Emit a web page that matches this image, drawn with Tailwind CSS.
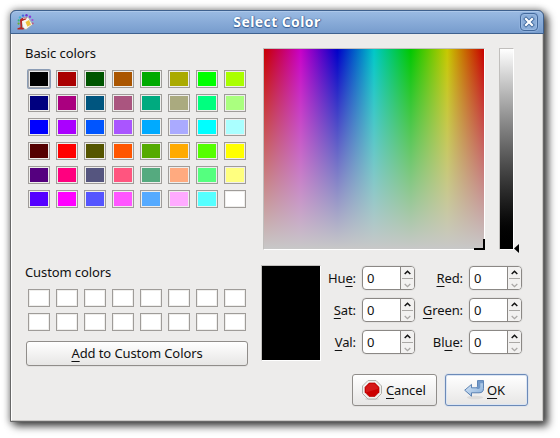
<!DOCTYPE html>
<html lang="en">
<head>
<meta charset="utf-8">
<title>Select Color</title>
<script src="https://cdn.jsdelivr.net/npm/@tailwindcss/browser@4"></script>
</head>
<body class="h-[438px] w-[560px] overflow-hidden bg-white pt-[10px] pl-[10px] font-['Noto_Sans',sans-serif] text-[13px] leading-[16px] text-[#111]">
<div class="flex h-[412px] w-[534px] flex-col rounded-t-[6px] border border-[#686868] bg-[#edeceb] shadow-[4px_4px_9px_0px_rgba(0,0,0,0.7),0_0_7px_1px_rgba(0,0,0,0.35)]">
  <header class="-mx-px -mt-px flex h-[24px] shrink-0 items-center rounded-t-[6px] border border-[#3f618e] bg-linear-to-b from-[#9bbbe3] to-[#779ccd] pr-[5px] pl-[6px] shadow-[inset_0_1px_0_#adc8ea]">
    <svg class="h-[17px] w-[17px]" viewBox="0 0 17 17">
      <g><circle cx="3" cy="3.4" r="1.2" fill="#3fb3d0"/><circle cx="6" cy="1.6" r="1.2" fill="#4068e0"/><circle cx="9.5" cy="1.2" r="1.2" fill="#6f35d0"/><circle cx="13" cy="2.8" r="1.2" fill="#8a3cd7"/><circle cx="15.4" cy="6" r="1.1" fill="#a34bd6"/><circle cx="1.7" cy="6.4" r="1.1" fill="#38b878"/><circle cx="15.6" cy="9.5" r="1.1" fill="#c04a80"/><circle cx="1.6" cy="9.6" r="1.1" fill="#66ad32"/></g>
      <path d="M4.5 7 11 3l4.5 7.5L9 15.5 6 14Z" fill="#f8f6f0" stroke="#a39a8c" stroke-width=".5"/>
      <path d="m8.5 8 3.5-2 2 4.5-3.5 2.2Z" fill="#edc03a"/>
      <path d="M3 5.5Q5 3 9.5 3.5L9 5.5 5 7v6.5l2 .5-.5 1.5H.5v-1.2l3-1Z" fill="#b72724"/>
      <path d="M6 4.4 9 4" stroke="#f5d8d5" stroke-width=".9"/>
    </svg>
    <h1 class="flex-1 text-center text-[14px] leading-[18px] font-bold tracking-[0.4px] text-white [text-shadow:0_0_1px_#365f95,0_1px_1px_#365f95,1px_0_1px_#4a72a8]">Select Color</h1>
    <button class="flex h-[18px] w-[18px] items-center justify-center rounded-[4px] border border-[#43699c] bg-[#8caed9] shadow-[0_0_0_1px_#8eb0dc,inset_0_0_0_1px_#9abae2]" aria-label="Close">
      <svg class="h-[12px] w-[12px]" viewBox="0 0 12 12"><path d="m3 3 6 6M9 3 3 9" stroke="#426b9f" stroke-width="4" stroke-linecap="square"/><path d="m3 3 6 6M9 3 3 9" stroke="#fff" stroke-width="2.2" stroke-linecap="square"/></svg>
    </button>
  </header>
  <main class="flex min-h-0 flex-1 border-r border-r-[#c9c7c5] border-b border-b-[#c9c7c5] border-l border-l-white">
    <section class="w-[249px] shrink-0 pt-[11px] pl-[13px]">
      <h2 class="tracking-[-0.07px] whitespace-nowrap">Basic colors</h2>
      <div id="basic" class="mt-[9px] ml-[3px] grid w-[218px] grid-cols-[repeat(8,22px)] gap-x-[6px] gap-y-[6px]"></div>
      <h2 class="mt-[56px] tracking-[-0.1px] whitespace-nowrap">Custom colors</h2>
      <div id="custom" class="mt-[9px] ml-[3px] grid w-[218px] grid-cols-[repeat(8,22px)] gap-x-[6px] gap-y-[6px]"></div>
      <button class="mt-[10px] ml-px block h-[25px] w-[222px] rounded-[3px] border border-[#908d8a] bg-linear-to-b from-white to-[#e7e6e5] pb-px tracking-[-0.1px] shadow-[0_1px_0_#e2e1e0]"><span class="underline decoration-1 underline-offset-[3px]">A</span>dd to Custom Colors</button>
    </section>
    <section class="min-w-0 flex-1 pt-[14px]">
      <div class="flex h-[205px] pl-[2px]">
        <div class="relative h-[202px] w-[222px] border border-t-[#c1bfbd] border-r-white border-b-white border-l-[#c1bfbd]">
          <div class="h-[200px] w-[220px] bg-[linear-gradient(to_bottom,rgba(200,200,200,0),rgb(200,200,200)),linear-gradient(to_right,#c80000,#c800c8,#0000c8,#00c8c8,#00c800,#c8c800,#c80000)]"></div>
          <div class="absolute -right-px -bottom-px h-[11px] w-[11px] border-r-2 border-b-2 border-black"></div>
        </div>
        <div class="ml-[14px] h-[202px] w-[15px] border border-t-[#c1bfbd] border-r-white border-b-white border-l-[#c1bfbd] bg-linear-to-b from-white to-black"></div>
        <svg class="mt-[196px] h-[9px] w-[5px]" viewBox="0 0 5 9"><path d="M0 4.5 5 0v9Z"/></svg>
      </div>
      <div class="mt-[12px] flex h-[96px]">
        <div class="h-[96px] w-[60px] border border-t-[#c1bfbd] border-r-white border-b-white border-l-[#c1bfbd] bg-black"></div>
        <div id="hsv" class="ml-[2px] grid grid-cols-[33px_53px] content-start gap-x-[6px] gap-y-[8px] pt-px"></div>
        <div id="rgb" class="ml-[5px] grid grid-cols-[43px_53px] content-start gap-x-[6px] gap-y-[8px] pt-px"></div>
      </div>
      <div class="mt-[13px] flex gap-[8px] pl-[91px]">
        <button class="flex h-[32px] w-[85px] items-center rounded-[3px] border border-[#908d8a] bg-linear-to-b from-white to-[#e7e6e5] pl-[9px] tracking-[-0.15px] shadow-[0_1px_0_#e2e1e0]">
          <svg class="h-[20px] w-[20px]" viewBox="0 0 20 20"><ellipse cx="10" cy="19" rx="7" ry="1" fill="#d2d1d0"/><path d="M6 .5h8L19.5 6v7.5L14 19H6L.5 13.5V6Z" fill="#f0f0ee" stroke="#b0b0ab"/><path d="M7.2 3h5.6L17 7.2v5.1l-4.2 4.2H7.2L3 12.3V7.2Z" fill="#cc0000" stroke="#b80000" stroke-width=".7"/><path d="M7.5 3.8h5L16 7.5v1.2L4 12.5v-5Z" fill="#e33d3d" opacity=".4"/></svg>
          <span class="ml-[4px]"><span class="underline decoration-1 underline-offset-[3px]">C</span>ancel</span>
        </button>
        <button class="flex h-[32px] w-[83px] items-center rounded-[3px] border border-[#6c8ab8] bg-linear-to-b from-white to-[#e7e6e5] pl-[18px] tracking-[-0.1px] shadow-[inset_0_0_0_1px_#dbe5f3,0_0_0_1px_#dfe4eb]">
          <svg class="h-[20px] w-[20px]" viewBox="0 0 20 20"><defs><linearGradient id="arrow" x1="0" y1="0" x2="1" y2="1"><stop stop-color="#e2eefa"/><stop offset="1" stop-color="#84acd8"/></linearGradient></defs><ellipse cx="11" cy="17.5" rx="8" ry="1.8" fill="#dddcdb"/><path d="M.7 10.2 7.5 4.4v3.4h4.6q1.4 0 1.4-1.5V.6h6v7.9q0 4.3-4.5 4.3H7.5v3.4Z" fill="url(#arrow)" stroke="#4f78ad" stroke-width=".9" stroke-linejoin="round"/><path d="M13.5.8h5.8v2.4h-3v3.5q0 2.3-2.8 2.3h-1l1-2.5Z" fill="#5d88bd" opacity=".75"/></svg>
          <span class="ml-[3px]"><span class="underline decoration-1 underline-offset-[3px]">O</span>K</span>
        </button>
      </div>
    </section>
  </main>
</div>
<script>
const basic = ['000000','aa0000','005500','aa5500','00aa00','aaaa00','00ff00','aaff00',
  '00007f','aa007f','00557f','aa557f','00aa7f','aaaa7f','00ff7f','aaff7f',
  '0000ff','aa00ff','0055ff','aa55ff','00aaff','aaaaff','00ffff','aaffff',
  '550000','ff0000','555500','ff5500','55aa00','ffaa00','55ff00','ffff00',
  '55007f','ff007f','55557f','ff557f','55aa7f','ffaa7f','55ff7f','ffff7f',
  '5500ff','ff00ff','5555ff','ff55ff','55aaff','ffaaff','55ffff','ffffff'];
const swatch = (c, i) => `<div class="h-[18px] border p-px ${i === 0 ? 'rounded-[1px] border-[#a3a5aa] bg-[#e8e8ea] shadow-[0_0_0_1px_#8b9cb5]' : 'border-[#9f9c99] bg-[#efeeec]'}"><div class="h-full" style="background:#${c}"></div></div>`;
document.getElementById('basic').innerHTML = basic.map(swatch).join('');
document.getElementById('custom').innerHTML = Array(16).fill('ffffff').map(c => swatch(c, 1)).join('');
const field = ([a, u, b]) => `<label class="self-center text-right tracking-[-0.1px] whitespace-nowrap">${a}<span class="underline decoration-1 underline-offset-[3px]">${u}</span>${b}:</label>
  <div class="flex h-[24px] rounded-[4px] border border-[#8b8885] bg-white shadow-[0_0_0_1px_#e4e3e2]">
    <span class="flex-1 pt-[3px] pl-[4px]">0</span>
    <div class="flex w-[14px] flex-col rounded-r-[3px] border-l border-[#8b8885] bg-[#f2f1f0]">
      <div class="h-[11px] pt-[3px] pl-[3px]"><svg class="h-[5px] w-[7px]" viewBox="0 0 7 5"><path d="m.7 4 2.8-2.7L6.3 4" fill="none" stroke="#111" stroke-width="1.5"/></svg></div>
      <div class="mx-px h-[11px] border-t border-[#aaa8a5] pt-[4px] pl-[2px]"><svg class="h-[5px] w-[7px]" viewBox="0 0 7 5"><path d="m.7 1 2.8 2.7L6.3 1" fill="none" stroke="#aaa8a6" stroke-width="1.3"/></svg></div>
    </div>
  </div>`;
document.getElementById('hsv').innerHTML = [['Hu','e',''],['','S','at'],['','V','al']].map(field).join('');
document.getElementById('rgb').innerHTML = [['','R','ed'],['','G','reen'],['Bl','u','e']].map(field).join('');
</script>
</body>
</html>
